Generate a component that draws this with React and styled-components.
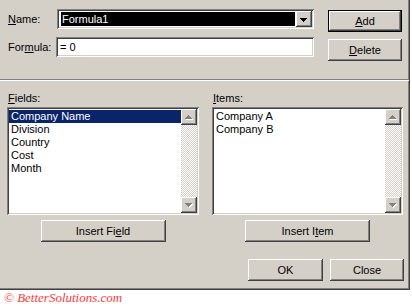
import React from "react";
import styled, { createGlobalStyle, css } from "styled-components";

const GlobalStyle = createGlobalStyle`
  body {
    margin: 0;
    background: #ffffff;
    font-family: "Liberation Sans", Arial, sans-serif;
    font-size: 11px;
    color: #000000;
  }
`;

const raised = css`
  background: #d4d0c8;
  box-shadow: inset -1px -1px #404040, inset 1px 1px #ffffff,
    inset -2px -2px #808080, inset 2px 2px #d4d0c8;
`;

const sunken = css`
  box-shadow: inset 1px 1px #808080, inset -1px -1px #ffffff,
    inset 2px 2px #404040, inset -2px -2px #d4d0c8;
`;

const Dialog = styled.div`
  box-sizing: border-box;
  width: 410px;
  height: 290px;
  background: #d4d0c8;
  border-right: 1px solid #404040;
  border-bottom: 1px solid #404040;
  box-shadow: inset -1px -1px #808080;
  display: flex;
  flex-direction: column;
`;

const Top = styled.div`
  display: grid;
  grid-template-columns: 49px 257px 88px;
  grid-template-rows: 28px 24px;
  padding: 9px 0 0 8px;
`;

const FieldLabel = styled.label`
  height: 20px;
  line-height: 20px;
  white-space: nowrap;
`;

const Combo = styled.div`
  box-sizing: border-box;
  height: 20px;
  padding: 2px;
  display: flex;
  background: #ffffff;
  ${sunken};
`;

const ComboValue = styled.div`
  flex: 1;
  margin: 1px 1px 1px 2px;
  background: #000000;
  color: #ffffff;
  line-height: 14px;
  padding-left: 1px;
`;

const DropButton = styled.div`
  width: 16px;
  height: 16px;
  ${raised};
  display: flex;
`;

const TextInput = styled.div`
  box-sizing: border-box;
  height: 20px;
  margin-left: -1px;
  padding: 0 4px;
  line-height: 20px;
  background: #ffffff;
  ${sunken};
`;

const Button = styled.button`
  box-sizing: border-box;
  width: ${(p) => p.$w || 74}px;
  height: 22px;
  padding: 0;
  border: ${(p) => (p.$default ? "1px solid #000000" : "none")};
  font-family: inherit;
  font-size: 11px;
  color: #000000;
  ${raised};
`;

const SideButton = styled(Button)`
  justify-self: end;
  margin-top: ${(p) => p.$top || 0}px;
`;

const Separator = styled.div`
  margin-top: 18px;
  height: 0;
  border-top: 1px solid #808080;
  border-bottom: 1px solid #ffffff;
`;

const Lower = styled.div`
  display: grid;
  grid-template-columns: 192px 191px;
  column-gap: 13px;
  padding: 11px 0 0 7px;
`;

const Column = styled.div`
  display: flex;
  flex-direction: column;
`;

const ListLabel = styled.div`
  line-height: 13px;
  margin: 0 0 2px 1px;
`;

const ListBox = styled.div`
  box-sizing: border-box;
  height: 108px;
  padding: 2px;
  display: flex;
  background: #ffffff;
  ${sunken};
`;

const Rows = styled.div`
  flex: 1;
  padding-top: 1px;
`;

const Row = styled.div`
  height: 13px;
  line-height: 13px;
  padding-left: 2px;
  white-space: nowrap;
  background: ${(p) => (p.$selected ? "#0a246a" : "transparent")};
  color: ${(p) => (p.$selected ? "#ffffff" : "#000000")};
`;

const ScrollBar = styled.div`
  width: 16px;
  display: flex;
  flex-direction: column;
`;

const ScrollButton = styled.div`
  width: 16px;
  height: 16px;
  display: flex;
  ${raised};
`;

const Track = styled.div`
  flex: 1;
  background: repeating-conic-gradient(#d4d0c8 0 25%, #ffffff 0 50%) 0 0 / 2px 2px;
`;

const CenterButton = styled(Button)`
  align-self: center;
  margin-top: 5px;
`;

const Footer = styled.div`
  display: flex;
  justify-content: flex-end;
  gap: 7px;
  padding-right: 5px;
  margin-top: 17px;
`;

const Watermark = styled.div`
  padding: 1px 0 0 4px;
  font-family: "Liberation Serif", "Times New Roman", serif;
  font-style: italic;
  font-size: 13px;
  line-height: 14px;
  color: #ff3b3b;
`;

const ArrowDown = () => (
  <svg width="16" height="16" viewBox="0 0 16 16" shapeRendering="crispEdges">
    <path d="M4 7h7v1H4zM5 8h5v1H5zM6 9h3v1H6zM7 10h1v1H7z" fill="#000000" />
  </svg>
);

const DisabledUp = () => (
  <svg width="16" height="16" viewBox="0 0 16 16" shapeRendering="crispEdges">
    <path d="M8 7h1v1H8zM7 8h3v1H7zM6 9h5v1H6zM5 10h7v1H5z" fill="#ffffff" />
    <path d="M7 6h1v1H7zM6 7h3v1H6zM5 8h5v1H5zM4 9h7v1H4z" fill="#808080" />
  </svg>
);

const DisabledDown = () => (
  <svg width="16" height="16" viewBox="0 0 16 16" shapeRendering="crispEdges">
    <path d="M5 7h7v1H5zM6 8h5v1H6zM7 9h3v1H7zM8 10h1v1H8z" fill="#ffffff" />
    <path d="M4 6h7v1H4zM5 7h5v1H5zM6 8h3v1H6zM7 9h1v1H7z" fill="#808080" />
  </svg>
);

const List = ({ rows, selected }) => (
  <ListBox>
    <Rows>
      {rows.map((r) => (
        <Row key={r} $selected={r === selected}>
          {r}
        </Row>
      ))}
    </Rows>
    <ScrollBar>
      <ScrollButton>
        <DisabledUp />
      </ScrollButton>
      <Track />
      <ScrollButton>
        <DisabledDown />
      </ScrollButton>
    </ScrollBar>
  </ListBox>
);

const fields = ["Company Name", "Division", "Country", "Cost", "Month"];
const items = ["Company A", "Company B"];

export default function App() {
  return (
    <>
      <GlobalStyle />
      <Dialog>
        <Top>
          <FieldLabel>
            <u>N</u>ame:
          </FieldLabel>
          <Combo>
            <ComboValue>Formula1</ComboValue>
            <DropButton>
              <ArrowDown />
            </DropButton>
          </Combo>
          <SideButton $default $top={1}>
            <u>A</u>dd
          </SideButton>
          <FieldLabel>
            For<u>m</u>ula:
          </FieldLabel>
          <TextInput>= 0</TextInput>
          <SideButton $top={2}>
            <u>D</u>elete
          </SideButton>
        </Top>
        <Separator />
        <Lower>
          <Column>
            <ListLabel>
              <u>F</u>ields:
            </ListLabel>
            <List rows={fields} selected="Company Name" />
            <CenterButton $w={125}>
              Insert Fi<u>e</u>ld
            </CenterButton>
          </Column>
          <Column>
            <ListLabel>
              <u>I</u>tems:
            </ListLabel>
            <List rows={items} />
            <CenterButton $w={125}>
              Insert I<u>t</u>em
            </CenterButton>
          </Column>
        </Lower>
        <Footer>
          <Button $w={75}>OK</Button>
          <Button>Close</Button>
        </Footer>
      </Dialog>
      <Watermark>© BetterSolutions.com</Watermark>
    </>
  );
}
